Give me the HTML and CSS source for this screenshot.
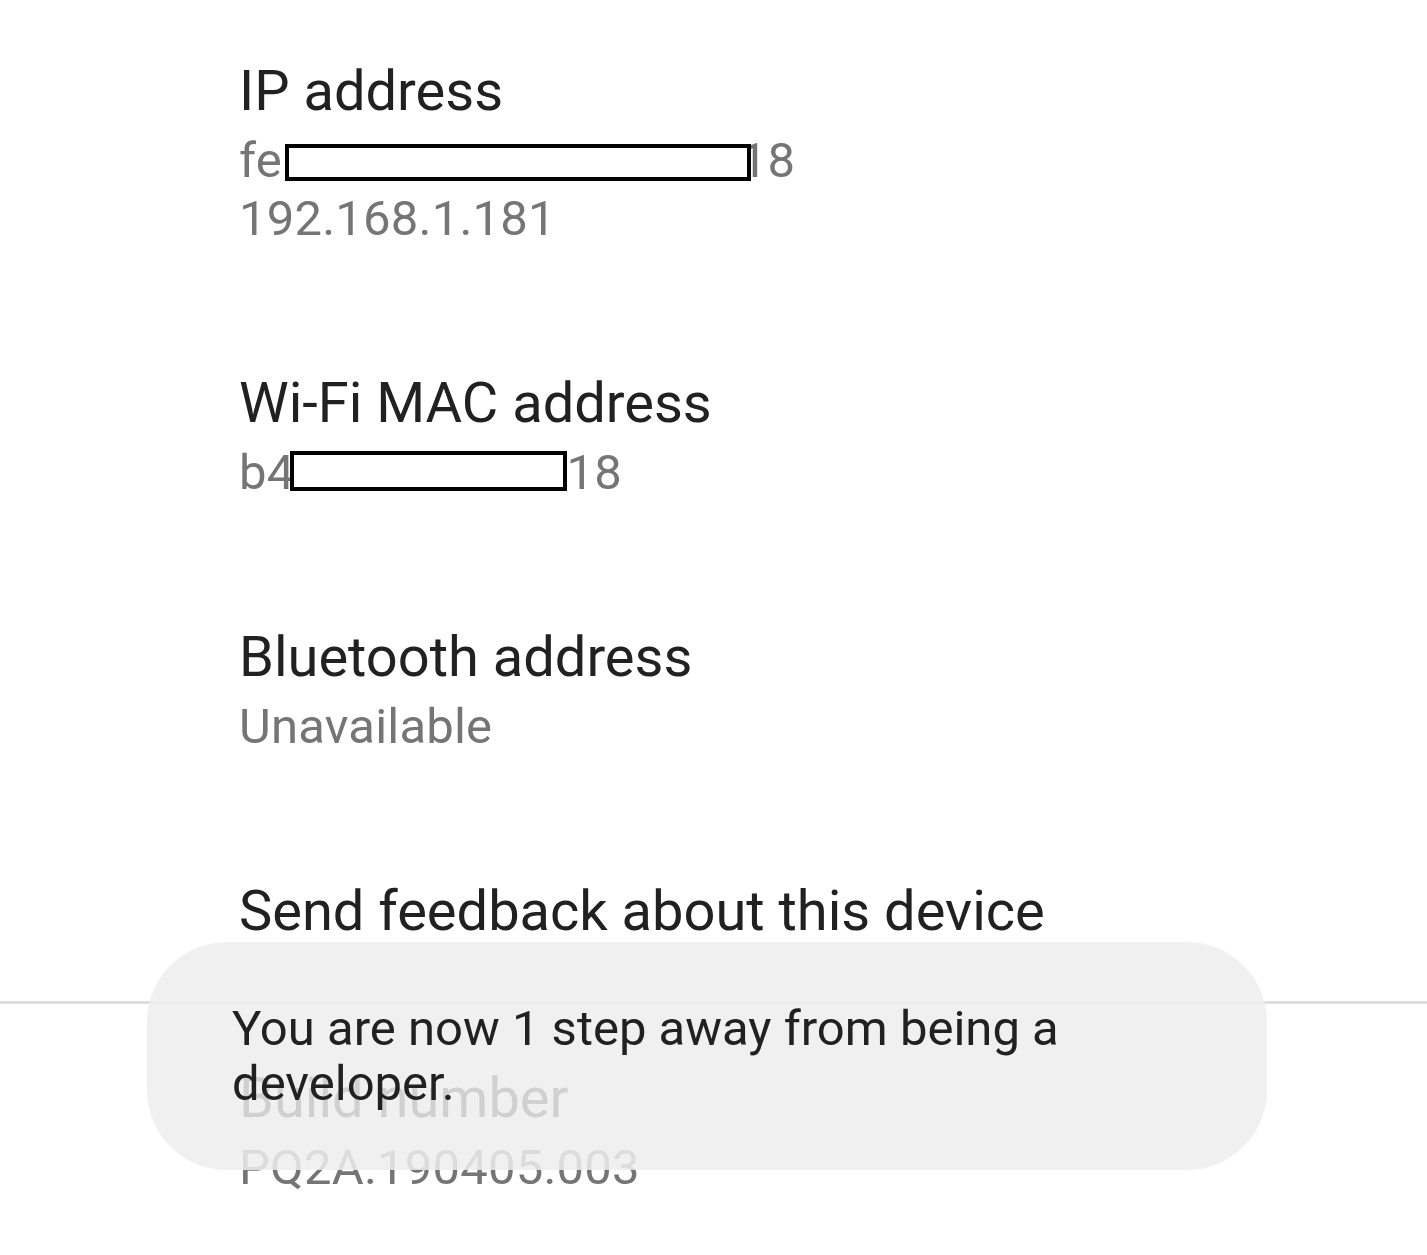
FILE: index.html
```html
<!DOCTYPE html>
<html lang="en">
<head>
<meta charset="utf-8">
<title>About phone</title>
<link rel="stylesheet" href="styles.css">
</head>
<body>
<div class="screen">
  <div class="list">
    <div class="pref first">
      <div class="title">IP address</div>
      <div class="summary">
        <div class="line">fe<span class="redact r1"></span><span class="tail t1">18</span></div>
        <div class="line">192.168.1.181</div>
      </div>
    </div>
    <div class="pref">
      <div class="title">Wi-Fi MAC address</div>
      <div class="summary">
        <div class="line">b4<span class="redact r2"></span><span class="tail t2">18</span></div>
      </div>
    </div>
    <div class="pref">
      <div class="title">Bluetooth address</div>
      <div class="summary">
        <div class="line">Unavailable</div>
      </div>
    </div>
    <div class="pref single">
      <div class="title">Send feedback about this device</div>
    </div>
    <div class="divider"></div>
    <div class="pref">
      <div class="title">Build number</div>
      <div class="summary">
        <div class="line">PQ2A.190405.003</div>
      </div>
    </div>
  </div>
  <div class="toast">You are now 1 step away from being a developer.</div>
</div>
</body>
</html>
```

FILE: styles.css
```css
html, body {
  margin: 0;
  padding: 0;
  background: #ffffff;
}

.screen {
  position: relative;
  width: 1427px;
  height: 1255px;
  overflow: hidden;
  font-family: Roboto, "Noto Sans", "Liberation Sans", sans-serif;
  background: #ffffff;
}

.list {
  display: flex;
  flex-direction: column;
}

.pref {
  padding: 61px 40px 61px 239px;
}

.pref.first {
  padding-top: 58px;
}

.pref.single {
  padding-bottom: 57px;
}

.title {
  font-size: 56px;
  line-height: 66px;
  color: #212121;
}

.summary {
  margin-top: 8px;
  font-size: 49px;
  line-height: 58px;
  letter-spacing: 0.2px;
  color: #757575;
}

.line {
  white-space: nowrap;
}

.redact {
  display: inline-block;
  position: relative;
  z-index: 1;
  box-sizing: border-box;
  border: 4px solid #000000;
  background: #ffffff;
}

.r1 {
  width: 466px;
  height: 37px;
  margin-left: 3px;
  vertical-align: -4px;
}

.r2 {
  width: 277px;
  height: 40px;
  margin-left: -4px;
  vertical-align: -2px;
}

.tail {
  position: relative;
  z-index: 0;
}

.t1 {
  margin-left: -11px;
}

.t2 {
  margin-left: -1px;
}

.divider {
  height: 3px;
  background: #dedede;
}

.toast {
  position: absolute;
  left: 147px;
  top: 942px;
  width: 1120px;
  height: 228px;
  box-sizing: border-box;
  padding: 59px 85px 0 85px;
  border-radius: 80px;
  background: rgba(237, 237, 237, 0.86);
  color: #212121;
  font-size: 49px;
  line-height: 55px;
}
```
